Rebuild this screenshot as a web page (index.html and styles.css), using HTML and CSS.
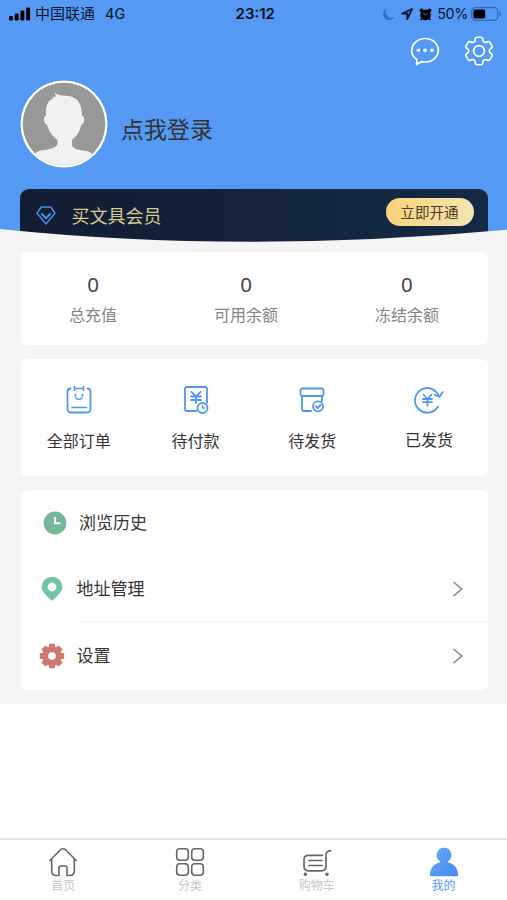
FILE: index.html
```html
<!DOCTYPE html>
<html lang="zh-CN">
<head>
<meta charset="utf-8">
<title>我的</title>
<link rel="stylesheet" href="styles.css">
</head>
<body>
<div class="app">
  <header class="hero">
    <div class="status">
      <div class="status-left">
        <svg class="signal" width="22" height="14" viewBox="0 0 22 14"><rect x="0" y="9" width="4" height="4.4" rx="1.2"/><rect x="5.7" y="6.6" width="4" height="6.8" rx="1.2"/><rect x="11.4" y="3.6" width="4" height="9.8" rx="1.2"/><rect x="17.1" y="0.6" width="4" height="12.8" rx="1.2"/></svg>
        <span>中国联通</span><span class="net">4G</span>
      </div>
      <div class="time">23:12</div>
      <div class="status-right">
        <svg width="12" height="12" viewBox="0 0 12 12"><path d="M4 .5A6 6 0 1 0 11.6 8.600 5.600 5.600 0 0 1 4 .5z" fill="#326ebd"/></svg>
        <svg class="arrow" width="12" height="12" viewBox="0 0 12 12"><path d="M11 1 1 5.700h5.200V11z" fill="none" stroke="#08162c" stroke-width="1.800" stroke-linejoin="round"/></svg>
        <svg class="alarm" width="13" height="13" viewBox="0 0 13 13"><circle cx="6.500" cy="6.900" r="5.300"/><circle cx="2.500" cy="2.400" r="1.900"/><circle cx="10.500" cy="2.400" r="1.900"/><path d="M2.700 10.500l-1 1.500M10.300 10.500l1 1.500" stroke="#050d1b" stroke-width="1.800"/><path d="M4.500 5l2 2 2-1.700" fill="none" stroke="#4d8ce0" stroke-width=".9"/></svg>
        <span class="percent">50%</span>
        <svg class="battery" width="31" height="14" viewBox="0 0 31 14"><rect x=".7" y=".7" width="26" height="12.600" rx="3.500" fill="none" stroke="#326ab3" stroke-width="1.300"/><rect x="2.400" y="2.400" width="11.800" height="9.200" rx="1.800"/><path d="M28.200 4.600c2.200.8 2.200 4 0 4.800z" fill="#326ab3"/></svg>
      </div>
    </div>
    <div class="actions">
      <svg width="30" height="30" viewBox="0 0 30 30" fill="none" stroke="#fff" stroke-width="1.700" stroke-linejoin="round"><path d="M7 23.500C3.500 21.300 1.700 18.200 1.700 14.700 1.700 8 7.600 2.500 15 2.500s13.300 5.300 13.300 11.800S22.500 26 15 26c-1.300 0-2.200-.1-3.300-.4L6.600 28.500z"/><g fill="#fff" stroke="none"><circle cx="8.500" cy="14.300" r="1.800"/><circle cx="15" cy="14.300" r="1.800"/><circle cx="22" cy="14.300" r="1.800"/></g></svg>
      <svg width="30" height="30" viewBox="2.200 2.200 19.600 19.600" fill="none" stroke="#fff" stroke-width="1.100" stroke-linejoin="round"><path d="M9.594 3.940c.09-.542.56-.94 1.110-.94h2.593c.55 0 1.020.398 1.110.94l.213 1.281c.063.374.313.686.645.87.074.04.147.083.22.127.325.196.72.257 1.075.124l1.217-.456a1.125 1.125 0 0 1 1.370.49l1.296 2.247a1.125 1.125 0 0 1-.26 1.431l-1.003.827c-.293.241-.438.613-.43.992a7.723 7.723 0 0 1 0 .255c-.008.378.137.75.43.991l1.004.827c.424.35.534.955.26 1.430l-1.298 2.247a1.125 1.125 0 0 1-1.369.491l-1.217-.456c-.355-.133-.75-.072-1.076.124a6.470 6.470 0 0 1-.22.128c-.331.183-.581.495-.644.869l-.213 1.281c-.09.543-.56.94-1.110.94h-2.594c-.55 0-1.019-.398-1.110-.94l-.213-1.281c-.062-.374-.312-.686-.644-.87a6.520 6.520 0 0 1-.22-.127c-.325-.196-.72-.257-1.076-.124l-1.217.456a1.125 1.125 0 0 1-1.369-.49l-1.297-2.247a1.125 1.125 0 0 1 .26-1.431l1.004-.827c.292-.24.437-.613.43-.991a6.932 6.932 0 0 1 0-.255c.007-.38-.138-.751-.43-.992l-1.004-.827a1.125 1.125 0 0 1-.26-1.430l1.297-2.247a1.125 1.125 0 0 1 1.370-.491l1.216.456c.356.133.751.072 1.076-.124.072-.044.146-.086.22-.128.332-.183.582-.495.644-.869z"/><circle cx="12" cy="12" r="3.500"/></svg>
    </div>
    <div class="profile">
      <svg width="88" height="88" viewBox="0 0 88 88">
        <defs><clipPath id="face"><circle cx="44" cy="44" r="41.500"/></clipPath></defs>
        <circle cx="44" cy="44" r="43.500" fill="#fff"/><circle cx="44" cy="44" r="41.300" fill="#989898"/>
        <path clip-path="url(#face)" fill="#f1f1f1" d="M26 36C25 26 28 20 34 18L32 17 36 16.500 34.600 12.500C38 15.500 42 15.400 48 16 57 17 62 23 62 36c3.300 0 2.800 8-.8 9-1.300 6.500-4.700 11.500-9.200 15v5.500c2 3.500 5 4 11 5 6 .5 9.500 2.500 12 7v12H13V77c1.500-5 6-6.500 12-7 6-1 9-2 12.500-5V60c-4.500-3.500-9-8.500-10.300-15-3.700-1-4.500-9-1.200-9z"/>
      </svg>
      <span class="login">点我登录</span>
    </div>
    <div class="member">
      <svg width="20" height="19" viewBox="0 0 20 19" fill="none" stroke="#4a90ee" stroke-width="1.400" stroke-linejoin="round"><path d="M5.300 1h9.400L19 7.200 10 18 1 7.200z"/><path d="M5.400 7.500 10 12.200 14.600 7.500" stroke-width="2"/></svg>
      <span class="member-name">买文具会员</span>
      <span class="open">立即开通</span>
    </div>
    <svg class="curve" width="507" height="24" viewBox="0 0 507 24"><path d="M0 1Q240 26 507 1.700V24H0z" fill="#f5f5f5"/></svg>
  </header>
  <main class="content">
    <section class="card stats">
      <div><b>0</b><span>总充值</span></div>
      <div><b>0</b><span>可用余额</span></div>
      <div><b>0</b><span>冻结余额</span></div>
    </section>
    <section class="card orders">
      <div>
        <svg width="30" height="30" viewBox="0 0 30 30"><path d="M6.500 3.500Q3.500 3.500 3.500 7v17q0 3.500 3.500 3.500h16q3.500 0 3.500-3.500V7q0-3.500-3-3.500"/><path d="M10.500 1.500v4M19.500 1.500v4M10.500 3.500h9M8 22.500h14.500" stroke-width="1.600"/><path d="M11.500 9.300v1.400M18.500 9.300v1.400M12 13q3 3 6 0" stroke-width="1.700"/></svg>
        <span>全部订单</span>
      </div>
      <div>
        <svg width="30" height="30" viewBox="0 0 30 30"><path d="M15.500 26H6q-2 0-2-2V4q0-2 2-2h18q2 0 2 2v14"/><path d="m10.500 7 4.500 4.500L19.500 7M15 11.500V18M10 11.500h10M10 15h10"/><circle cx="21.500" cy="23" r="5"/><path d="M21.500 20.500V23h2" stroke-width="1.300"/></svg>
        <span>待付款</span>
      </div>
      <div>
        <svg width="30" height="30" viewBox="0 0 30 30"><rect x="3.500" y="3.500" width="23" height="7.500" rx="2"/><path d="M5 11v13q0 2 2 2h7M25 11v5"/><circle cx="21" cy="21.300" r="5"/><path d="m18.700 21.200 1.800 1.900 3-3.300"/></svg>
        <span>待发货</span>
      </div>
      <div class="raised">
        <svg width="30" height="30" viewBox="0 0 30 30"><path d="M25 11.500A12.300 12.300 0 1 0 24 21.500"/><path d="m20.500 9.800 5 2.200 3.200-5"/><path d="m9.500 9.500 4 4.500 4-4.500M13.500 14v6.500M9 14h9M9 17.200h9"/></svg>
        <span>已发货</span>
      </div>
    </section>
    <section class="card menu">
      <div class="row first">
        <svg width="24" height="24" viewBox="0 0 24 24"><circle cx="12" cy="12" r="11.400" fill="#75b798"/><path d="M12 6v6.300h5.500" fill="none" stroke="#fff" stroke-width="1.900"/></svg>
        <span>浏览历史</span>
      </div>
      <div class="row">
        <svg width="24" height="26" viewBox="0 0 24 26"><path d="M12 24.700C7 20.500 1.600 15.500 1.600 11.200a10.400 10.400 0 0 1 20.800 0C22.400 15.500 17 20.500 12 24.700z" fill="#73c5a2"/><circle cx="12" cy="11" r="4.400" fill="#fff"/></svg>
        <span>地址管理</span>
        <svg class="chevron" width="12" height="16" viewBox="0 0 12 16"><path d="m1.500 1 8.200 7-8.200 7"/></svg>
      </div>
      <hr>
      <div class="row">
        <svg width="26" height="26" viewBox="-13 -13 26 26"><g fill="#d07772"><circle r="9.500"/><path id="teeth" d="M-2.700-12.200h5.400L3.500-8h-7zM-2.700 12.200h5.400L3.500 8h-7zM-12.200-2.700v5.400L-8 3.500v-7zM12.200-2.700v5.400L8 3.500v-7z"/><use href="#teeth" transform="rotate(45)"/></g><circle r="3.800" fill="#fff"/></svg>
        <span>设置</span>
        <svg class="chevron" width="12" height="16" viewBox="0 0 12 16"><path d="m1.500 1 8.200 7-8.200 7"/></svg>
      </div>
    </section>
  </main>
  <nav class="tabs">
    <div>
      <svg width="30" height="30" viewBox="0 0 30 30"><path d="M1.800 13.500 12.500 2.700q2.500-2 5 0L28.200 13.500M3.700 12v12q0 4.500 4.500 4.500H11V21q0-2 2-2h4q2 0 2 2v7.500h2.800q4.500 0 4.500-4.500V12"/></svg>
      <span>首页</span>
    </div>
    <div>
      <svg width="30" height="30" viewBox="0 0 30 30"><rect x="1.700" y="1.700" width="11.600" height="11.600" rx="3.200"/><rect x="16.700" y="1.700" width="11.600" height="11.600" rx="3.200"/><rect x="1.700" y="16.700" width="11.600" height="11.600" rx="3.200"/><rect x="16.700" y="16.700" width="11.600" height="11.600" rx="3.200"/></svg>
      <span>分类</span>
    </div>
    <div>
      <svg width="30" height="30" viewBox="0 0 30 30"><path d="M20.500 8.300H6.500q-4.500 0-4.500 4.500v6.500q0 4.500 4.500 4.500h13q4.500 0 4.500-4.500V8q0-4.200 4.500-4.200M7 13.500h13M7 18.500h13" stroke-width="1.700"/><circle cx="3.300" cy="27.300" r="1.700" fill="#666" stroke="none"/><circle cx="25" cy="27.300" r="1.700" fill="#666" stroke="none"/></svg>
      <span>购物车</span>
    </div>
    <div class="active">
      <svg width="30" height="30" viewBox="0 0 30 30"><defs><linearGradient id="user" x1="0" y1="0" x2="1" y2="1"><stop stop-color="#6aaaf5"/><stop offset="1" stop-color="#4389ee"/></linearGradient></defs><path d="M15 .8a7.300 7.300 0 0 1 4.200 13.300v1.500C25.300 17 29 21.500 29 28q0 1.200-1.200 1.200H2.200Q1 29.200 1 28c0-6.500 3.700-11 9.800-12.400v-1.500A7.300 7.300 0 0 1 15 .8z" fill="url(#user)" stroke="none"/></svg>
      <span>我的</span>
    </div>
  </nav>
</div>
</body>
</html>
```

FILE: styles.css
```css
* { box-sizing: border-box; }
body { margin: 0; background: #fff; color: #333; font-family: "Noto Sans CJK SC", sans-serif; }
svg { display: block; flex: none; }
.app { width: 507px; height: 900px; display: flex; flex-direction: column; overflow: hidden; }

.hero { position: relative; height: 246px; flex: none; background: #5499f4; overflow: hidden; }
.status { display: grid; grid-template-columns: 1fr auto 1fr; align-items: center; height: 28px; padding: 0 5px 0 8.500px; color: #08162c; font: 15px/20px Inter, "Noto Sans CJK SC", sans-serif; }
.status-left { display: flex; align-items: center; font-size: 15px; }
.signal { margin-right: 4.500px; }
.net { margin-left: 10px; font-size: 14.5px; }
.time { color: #050d1b; font-weight: 600; font-size: 15px; letter-spacing: 0; }
.status-right { display: flex; align-items: center; justify-content: flex-end; }
.arrow { margin-left: 6px; }
.alarm { margin-left: 6px; }
.percent { margin-left: 5px; font-size: 14.3px; letter-spacing: -.3px; }
.battery { margin-left: 3px; }
.actions { display: flex; justify-content: flex-end; gap: 24px; height: 52px; padding: 8px 13px 0 0; }
.profile { display: flex; align-items: center; height: 88px; padding-left: 20px; }
.login { margin: 8px 0 0 13px; font-size: 23px; line-height: 32px; }
.member { display: flex; align-items: center; height: 60px; margin: 21px 19.500px 0 20.400px; padding: 0 14px 8px 16px; border-radius: 9px; background: linear-gradient(90deg, #111d32, #152a45); }
.member-name { flex: 1; margin-left: 15px; color: #d7ca90; font-size: 18px; line-height: 24px; }
.open { width: 88px; height: 28px; margin-bottom: 6px; border-radius: 14px; background: linear-gradient(100deg, #f8d27a, #f3e5b4); color: #4b3b20; font-size: 14.600px; line-height: 28px; text-align: center; }
.curve { position: absolute; left: 0; top: 228px; z-index: 1; }

.content { display: flex; flex-direction: column; gap: 14px; height: 458px; flex: none; padding: 6px 19.500px 14px 20.500px; background: #f5f5f5; }
.card { border-radius: 6px; background: #fff; }
.stats { display: flex; justify-content: space-between; height: 93px; padding: 19px 48.500px 0; text-align: center; }
.stats b, .stats span { display: block; }
.stats b { color: #444; font: 400 20.500px/26px "Noto Sans", sans-serif; }
.stats span { margin-top: 5px; color: #858585; font-size: 16px; line-height: 24px; }
.orders { display: grid; grid-template-columns: repeat(4, 1fr); height: 117px; padding-top: 26px; }
.orders div { display: flex; flex-direction: column; align-items: center; }
.orders svg { fill: none; stroke: #5098ed; stroke-width: 1.800; stroke-linecap: round; stroke-linejoin: round; }
.orders span { margin-top: 13px; font-size: 16px; line-height: 24px; }
.orders .raised span { margin-top: 12px; }
.menu { height: 200px; }
.row { display: flex; align-items: center; height: 66px; padding: 0 24px 0 19.500px; font-size: 17px; line-height: 24px; }
.row span { margin: -2px 0 0 12.500px; flex: 1; }
.row.first { padding-left: 22px; }
.menu hr { height: 1px; margin: 0 0 0 59px; border: 0; background: #f0f0f0; }
.menu hr + .row span { margin-left: 11.500px; }
.menu hr + .row { padding-left: 18.500px; }
.chevron { fill: none; stroke: #888; stroke-width: 1.600; }

.tabs { display: grid; grid-template-columns: repeat(4, 1fr); height: 62px; margin-top: auto; padding-top: 7px; border-top: 2px solid #e4e4e4; background: #fff; }
.tabs div { display: flex; flex-direction: column; align-items: center; color: #c5c7ca; font-size: 12px; line-height: 16px; }
.tabs svg { fill: none; stroke: #666; stroke-width: 1.600; stroke-linejoin: round; stroke-linecap: round; }
.tabs .active { color: #5599f1; }
```
